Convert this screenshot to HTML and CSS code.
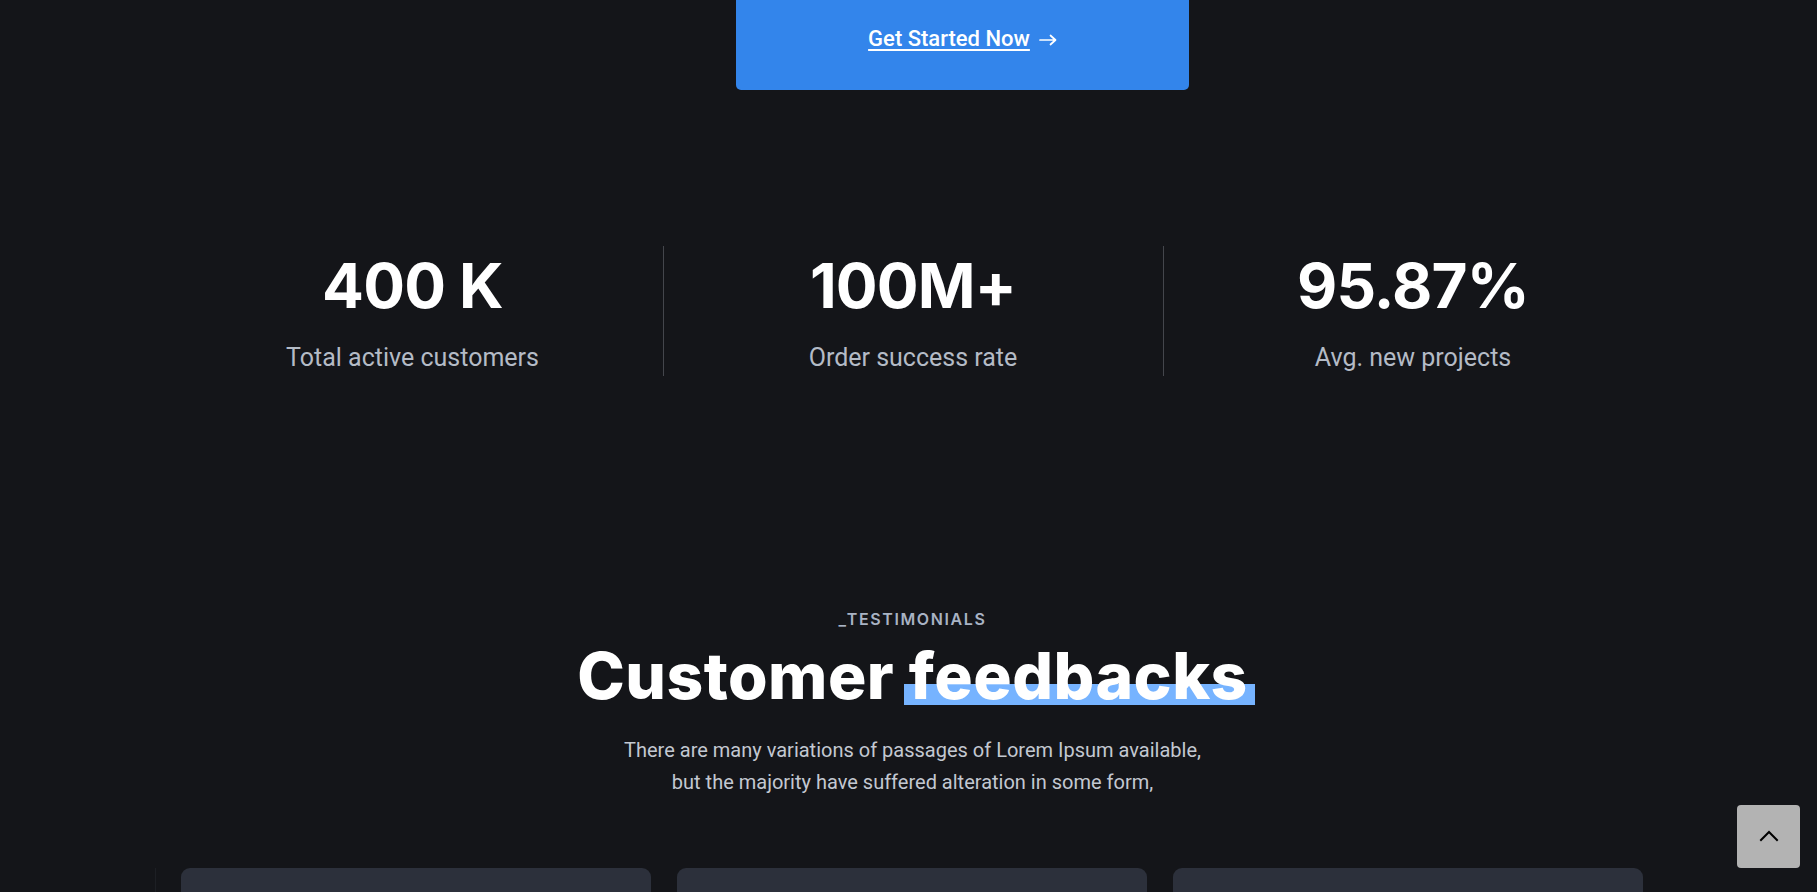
FILE: index.html
```html
<!DOCTYPE html>
<html lang="en">
<head>
<meta charset="utf-8">
<title>Customer feedbacks</title>
<link rel="stylesheet" href="styles.css">
</head>
<body>
<div class="page">
  <section class="cta">
    <a class="cta-btn" href="#">
      <span class="cta-text">Get Started Now</span>
      <svg class="cta-arrow" width="18" height="12" viewBox="0 0 18 12" fill="none" stroke="#fff" stroke-width="1.7" stroke-linecap="round" stroke-linejoin="round"><path d="M1 6h15.5M11.5 1.5 16.5 6l-5 4.5"/></svg>
    </a>
  </section>

  <section class="stats">
    <div class="stat">
      <div class="stat-num">400 K</div>
      <div class="stat-label">Total active customers</div>
    </div>
    <div class="stat stat-div">
      <div class="stat-num">100M+</div>
      <div class="stat-label">Order success rate</div>
    </div>
    <div class="stat stat-div">
      <div class="stat-num">95.87%</div>
      <div class="stat-label">Avg. new projects</div>
    </div>
  </section>

  <section class="testimonials">
    <div class="eyebrow">_Testimonials</div>
    <h2 class="title">Customer <span class="mark">feedbacks</span></h2>
    <p class="lead">There are many variations of passages of Lorem Ipsum available,<br>but the majority have suffered alteration in some form,</p>
    <div class="slider">
      <div class="card"></div>
      <div class="card"></div>
      <div class="card"></div>
    </div>
  </section>
</div>

<a class="to-top" href="#" aria-label="Back to top">
  <svg width="20" height="12" viewBox="0 0 20 12" fill="none" stroke="#000" stroke-width="2" stroke-linecap="square"><path d="M2 10 10 2l8 8"/></svg>
</a>
</body>
</html>
```

FILE: styles.css
```css
html, body {
  margin: 0;
  padding: 0;
  background: #141519;
  overflow: hidden;
  height: 892px;
}

body {
  font-family: Roboto, "Liberation Sans", sans-serif;
  color: #fff;
}

.page {
  padding-left: 8px;
}

/* CTA button */
.cta {
  display: flex;
  justify-content: center;
  padding-left: 100px;
}

.cta-btn {
  width: 453px;
  height: 90px;
  background: #3385eb;
  border-radius: 0 0 5px 5px;
  display: flex;
  align-items: center;
  justify-content: center;
  gap: 9px;
  padding-bottom: 12px;
  box-sizing: border-box;
  text-decoration: none;
  color: #fff;
}

.cta-text {
  font-size: 22px;
  font-weight: 500;
  line-height: 26px;
  text-decoration: underline;
  text-decoration-thickness: 2px;
  text-underline-offset: 3px;
}

.cta-arrow {
  display: block;
  margin-top: 1px;
}

/* Stats */
.stats {
  display: grid;
  grid-template-columns: repeat(3, 500px);
  justify-content: center;
  margin-top: 156px;
}

.stat {
  text-align: center;
  padding: 7px 0 2px;
}

.stat-div {
  border-left: 1px solid #44464c;
}

.stat-num {
  font-family: Inter, "Noto Sans", sans-serif;
  font-weight: 700;
  font-size: 62px;
  line-height: 66px;
  letter-spacing: -0.8px;
  margin-bottom: 23px;
}

.stat-label {
  font-size: 25px;
  line-height: 32px;
  color: #b4bbc6;
}

/* Testimonials */
.testimonials {
  margin-top: 233px;
  display: flex;
  flex-direction: column;
  align-items: center;
}

.eyebrow {
  font-family: Inter, "Noto Sans", sans-serif;
  font-weight: 600;
  font-size: 16px;
  line-height: 20px;
  letter-spacing: 1.6px;
  text-transform: uppercase;
  color: #a9b3c4;
}

.title {
  margin: 9px 0 0;
  font-family: Inter, "Noto Sans", sans-serif;
  font-weight: 800;
  font-size: 64px;
  line-height: 76px;
  letter-spacing: 0.5px;
}

.mark {
  position: relative;
  z-index: 0;
}

.mark::before {
  content: "";
  position: absolute;
  z-index: -1;
  left: -5px;
  right: -7px;
  top: 47px;
  height: 21px;
  background: #76b3ff;
}

.lead {
  margin: 20px 0 0;
  font-size: 20px;
  line-height: 32px;
  text-align: center;
  color: #c3c8d1;
}

.slider {
  margin-top: 70px;
  width: 1515px;
  box-sizing: border-box;
  padding-left: 25px;
  border-left: 1px solid #1d1f24;
  display: flex;
  gap: 26px;
}

.card {
  width: 470px;
  height: 300px;
  background: #2c303b;
  border-radius: 9px;
}

/* Back to top */
.to-top {
  position: fixed;
  right: 17px;
  bottom: 24px;
  width: 63px;
  height: 63px;
  background: #b3b3b3;
  border-radius: 4px;
  display: flex;
  align-items: center;
  justify-content: center;
}

.to-top svg {
  margin-top: -2px;
}
```
